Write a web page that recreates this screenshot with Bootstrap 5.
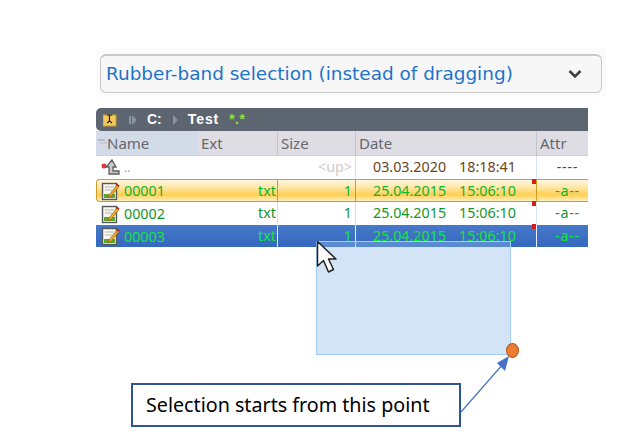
<!DOCTYPE html>
<html lang="en">
<head>
<meta charset="utf-8">
<title>Rubber-band selection</title>
<link rel="stylesheet" href="https://cdn.jsdelivr.net/npm/bootstrap@5.3.0/dist/css/bootstrap.min.css">
<style>
html,body{background:#fff;overflow:hidden}
.stage{position:relative;width:628px;height:436px;padding:48px 0 0 96px;font-family:"Noto Sans",sans-serif}
.combo-wrap{width:510px;height:49px;background:#fbfbfb;padding:6px 4px 4px}
.combo-box{height:39px;border:1px solid #c8c8c8;border-top-width:2px;border-radius:6px;background:#f7f7f7;padding:0 19px 0 5px;font-family:"DejaVu Sans",sans-serif;font-size:18.46px;color:#1f73c9}
.grid-wrap{width:492px;margin-top:11px}
.tool-bar{height:23px;background:#5d6570;color:#fff;font-family:"Liberation Sans",sans-serif;font-weight:700;font-size:14px;border-radius:5px 0 0 5px;padding-left:7px}
.tool-bar .path-c{margin:0 11px 0 9px}
.tool-bar .path-t{margin-left:9px;letter-spacing:.9px}
.tool-bar .path-m{margin-left:10px;color:#8fe03c;letter-spacing:.5px}
.pad-tri{margin-left:12px}
.head-row{height:25px;background:#dedde3;color:#67676e;font-size:15px;line-height:25px;border-bottom:1px solid #cfd2dc}
.head-cell{border-right:1px solid #c4c4cc;padding-left:3px;height:100%}
.head-cell:last-child{border-right:0}
.head-name{background:#d3dbe8;border-right:0;padding-left:11px;position:relative}
.head-name::before{content:"";position:absolute;left:2px;top:8px;width:7px;height:2px;background:#b4bac6;box-shadow:2px 3px 0 0 #c8ccd6}
.c-name{width:102px}.c-ext{width:80px}.c-size{width:78px}.c-date{width:181px}.c-attr{width:51px}
.file-row{height:23px;font-size:14.3px;line-height:22px;color:#12962a}
.file-row .c-ext,.file-row .c-size{text-align:right;padding-right:1px}
.file-row .body-cell{height:100%;border-right:1px solid #d4e3f2}
.file-row .body-cell.c-name{border-right:0;padding-left:5px;display:flex;align-items:center;gap:3px}
.file-row .body-cell.c-ext{padding-right:1px}
.file-row .body-cell.c-size{padding-right:3px}
.file-row .body-cell.c-date{position:relative;padding-left:17px;display:flex;gap:13px}
.file-row .body-cell.c-attr{border-right:0;text-align:center;padding-left:10px;letter-spacing:.8px}
.red-tick{position:absolute;right:0;top:-1px;width:4px;height:5px;background:#d81c1c}
.row-up{color:#6d4318}
.row-up .c-size{color:#d2ccc8}
.row-up .c-name .dots{color:#a09c96;padding-left:1px;font-size:12px}
.row-hot{background:linear-gradient(#fff6de,#ffe7a8 35%,#ffcf52 70%,#fff0bf);border:1px solid #cf9d22;border-right:0;border-radius:4px 0 0 4px;color:#0db52b;height:23px;line-height:21px}
.row-hot .body-cell.c-name{padding-left:4px}
.row-hot .body-cell.c-ext{width:79px}
.row-hot .body-cell{border-right-color:#cf9d22!important}
.row-sel{height:22px;background:linear-gradient(#4679c8,#3568bf);color:#14e63c;line-height:21px}
.row-sel .body-cell{border-right-color:#e6eefa!important}
.band{position:absolute;left:316px;top:241px;width:195px;height:114px;background:rgba(145,187,232,.4);border:1px solid #a3cbf7}
.pointer{position:absolute;left:316px;top:240px}
.start-dot{position:absolute;left:506px;top:343px;width:13px;height:15px;border-radius:50%;background:#ed7d31;border:1px solid #ae5a21}
.leader{position:absolute;left:455px;top:350px}
.note-box{position:absolute;left:131px;top:383px;width:330px;height:44px;background:#fff;border:2px solid #2f5597;padding-left:13px;font-size:19.7px;line-height:40px;color:#000;white-space:nowrap}
</style>
</head>
<body>
<svg width="0" height="0" class="d-block position-absolute">
<defs>
<symbol id="note" viewBox="0 0 20 20">
<rect x="1.5" y="2.5" width="14" height="16" fill="#f6f6ee" stroke="#55585c" stroke-width="1.4"/>
<path d="M3 13h11v4H3z" fill="#5da52f"/>
<path d="M4 6h9M4 9h7" stroke="#b7b7ae"/>
<path d="M8 14 16 4l2 1.500-8 10-3 1z" fill="#f0a91e" stroke="#8a5a10" stroke-width=".6"/>
<path d="M16 2.500l2.500 2-1 1.200-2.500-2z" fill="#b3202a"/>
</symbol>
</defs>
</svg>
<div class="stage">
  <div class="combo-wrap">
    <div class="combo-box d-flex align-items-center justify-content-between">
      <span>Rubber-band selection (instead of dragging)</span>
      <svg width="14" height="10" viewBox="0 0 14 10"><path d="M1.500 2 7 7.500 12.500 2" fill="none" stroke="#3e4248" stroke-width="2.600"/></svg>
    </div>
  </div>
  <div class="grid-wrap">
    <div class="tool-bar d-flex align-items-center">
      <svg width="14" height="14" viewBox="0 0 14 14"><rect x="0" y="2" width="13" height="11" fill="#f2c85a" stroke="#c89a30"/><path d="M4 2h5M6.500 2v7M4 10l2.500-2 2.500 2" stroke="#222" stroke-width="1.200" fill="none"/></svg>
      <svg class="pad-tri" width="9" height="10" viewBox="0 0 9 10"><path d="M0 1h2v8H0zM3 0l5 5-5 5z" fill="#8d939b"/></svg>
      <span class="path-c">C:</span>
      <svg width="6" height="10" viewBox="0 0 6 10"><path d="M0 0l5 5-5 5z" fill="#8d939b"/></svg>
      <span class="path-t">Test</span>
      <span class="path-m">*.*</span>
    </div>
    <div class="head-row d-flex">
      <div class="head-cell head-name c-name">Name</div>
      <div class="head-cell c-ext">Ext</div>
      <div class="head-cell c-size">Size</div>
      <div class="head-cell c-date">Date</div>
      <div class="head-cell c-attr">Attr</div>
    </div>
    <div class="file-row row-up d-flex">
      <div class="body-cell c-name">
        <svg width="19" height="17" viewBox="0 0 19 17"><circle cx="3" cy="7" r="2.500" fill="#e8303a"/><path d="M11 1 5 8h3v7h10v-3h-6V8h3z" fill="#c9c9c9" stroke="#5c5c5c" stroke-width="1.300"/></svg>
        <span class="dots">..</span>
      </div>
      <div class="body-cell c-ext border-0"></div>
      <div class="body-cell c-size">&lt;up&gt;</div>
      <div class="body-cell c-date"><span>03.03.2020</span><span>18:18:41</span></div>
      <div class="body-cell c-attr">----</div>
    </div>
    <div class="file-row row-hot d-flex">
      <div class="body-cell c-name"><svg width="20" height="20"><use href="#note"/></svg><span>00001</span></div>
      <div class="body-cell c-ext">txt</div>
      <div class="body-cell c-size">1</div>
      <div class="body-cell c-date"><span>25.04.2015</span><span>15:06:10</span><i class="red-tick"></i></div>
      <div class="body-cell c-attr">-a--</div>
    </div>
    <div class="file-row d-flex">
      <div class="body-cell c-name"><svg width="20" height="20"><use href="#note"/></svg><span>00002</span></div>
      <div class="body-cell c-ext">txt</div>
      <div class="body-cell c-size">1</div>
      <div class="body-cell c-date"><span>25.04.2015</span><span>15:06:10</span><i class="red-tick"></i></div>
      <div class="body-cell c-attr">-a--</div>
    </div>
    <div class="file-row row-sel d-flex">
      <div class="body-cell c-name"><svg width="20" height="20"><use href="#note"/></svg><span>00003</span></div>
      <div class="body-cell c-ext">txt</div>
      <div class="body-cell c-size">1</div>
      <div class="body-cell c-date"><span>25.04.2015</span><span>15:06:10</span><i class="red-tick"></i></div>
      <div class="body-cell c-attr">-a--</div>
    </div>
  </div>
  <div class="band"></div>
  <svg class="pointer" width="22" height="34" viewBox="0 0 22 34"><path d="M1.500 1.500V26l6-5.500L12.500 32l5-2.500-5-10.500H20z" fill="#fff" stroke="#222" stroke-width="1.500" stroke-linejoin="round"/></svg>
  <svg class="leader" width="60" height="66" viewBox="0 0 60 66"><path d="M6 62 48 14" stroke="#4472c4" stroke-width="1.200"/><path d="M54 6 42 13l8 8z" fill="#4472c4"/></svg>
  <div class="start-dot"></div>
  <div class="note-box">Selection starts from this point</div>
</div>
<script src="https://cdn.jsdelivr.net/npm/bootstrap@5.3.0/dist/js/bootstrap.bundle.min.js"></script>
</body>
</html>
